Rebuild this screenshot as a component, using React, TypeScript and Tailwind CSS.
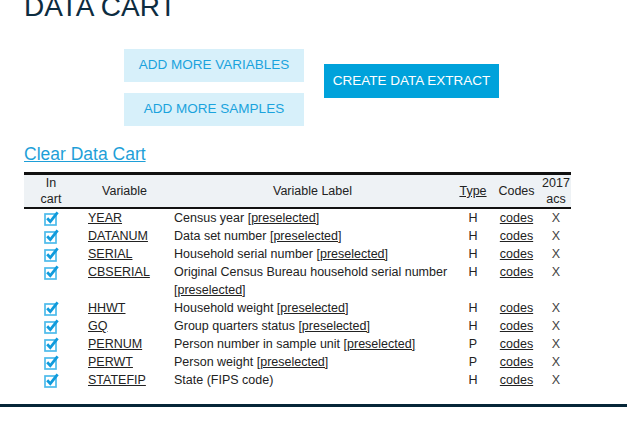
import React from "react";

type Row = { name: string; label: string; pre: boolean; type: string };

const rows: Row[] = [
    { name: "YEAR", label: "Census year", pre: true, type: "H" },
    { name: "DATANUM", label: "Data set number", pre: true, type: "H" },
    { name: "SERIAL", label: "Household serial number", pre: true, type: "H" },
    { name: "CBSERIAL", label: "Original Census Bureau household serial number", pre: true, type: "H" },
    { name: "HHWT", label: "Household weight", pre: true, type: "H" },
    { name: "GQ", label: "Group quarters status", pre: true, type: "H" },
    { name: "PERNUM", label: "Person number in sample unit", pre: true, type: "P" },
    { name: "PERWT", label: "Person weight", pre: true, type: "P" },
    { name: "STATEFIP", label: "State (FIPS code)", pre: false, type: "H" },
];

const CheckIcon = () => (
    <svg width="15" height="15" viewBox="0 0 15 15" className="inline-block">
        <rect x="1" y="3" width="11" height="11" fill="none" stroke="#4dbbeb" strokeWidth="1.7" />
        <path d="M3.2 7.2 L6.3 10.6 L13.6 1.4" fill="none" stroke="#109bdc" strokeWidth="2.8" />
    </svg>
);

const App = () => {
    return (
        <div className="min-h-[432px] w-[627px] bg-white font-['Liberation_Sans',Arial,sans-serif] text-[#222]">
            <h1 className="ml-[24px] mt-[-8px] text-[28px] leading-[30px] text-[#0d2c40]">DATA CART</h1>

            <div className="ml-[124px] mt-[27px] flex gap-[20px]">
                <div className="flex flex-col gap-[11px]">
                    <button className="h-[33px] w-[180px] bg-[#d7f0fa] text-[13.5px] text-[#1aa3dd]">ADD MORE VARIABLES</button>
                    <button className="h-[33px] w-[180px] bg-[#d7f0fa] text-[13.5px] text-[#1aa3dd]">ADD MORE SAMPLES</button>
                </div>
                <button className="mt-[15px] h-[34px] w-[175px] bg-[#00a2db] text-[13.5px] text-white">CREATE DATA EXTRACT</button>
            </div>

            <a href="#" className="ml-[24px] mt-[17px] block w-fit text-[17.5px] leading-[22px] text-[#1e9fd8] underline">
                Clear Data Cart
            </a>

            <table className="ml-[24px] mt-[7px] w-[547px] table-fixed border-collapse text-[12.5px]">
                <colgroup>
                    <col className="w-[54px]" />
                    <col className="w-[93px]" />
                    <col className="w-[283px]" />
                    <col className="w-[38px]" />
                    <col className="w-[49px]" />
                    <col className="w-[30px]" />
                </colgroup>
                <thead>
                    <tr className="border-t-[3px] border-b-2 border-[#111] bg-[#eef2f5] leading-[16px]">
                        <th className="h-[32px] p-0 text-center font-normal">In<br />cart</th>
                        <th className="p-0 text-center font-normal">Variable</th>
                        <th className="p-0 text-center font-normal">Variable Label</th>
                        <th className="p-0 text-center font-normal underline">Type</th>
                        <th className="p-0 text-center font-normal">Codes</th>
                        <th className="p-0 text-center font-normal">2017<br />acs</th>
                    </tr>
                </thead>
                <tbody className="leading-[18px]">
                    {rows.map((r) => (
                        <tr key={r.name} className="align-top">
                            <td className="p-0 pt-[2px] text-center leading-[0]"><CheckIcon /></td>
                            <td className="p-0 pl-[10px]"><a href="#" className="underline">{r.name}</a></td>
                            <td className="p-0 pl-[3px] pr-[4px]">
                                {r.label}
                                {r.pre && (
                                    <>
                                        {" "}
                                        <a href="#" className="underline">[preselected]</a>
                                    </>
                                )}
                            </td>
                            <td className="p-0 text-center">{r.type}</td>
                            <td className="p-0 text-center"><a href="#" className="underline">codes</a></td>
                            <td className="p-0 text-center text-[#444]">X</td>
                        </tr>
                    ))}
                </tbody>
            </table>

            <div className="mt-[15px] h-[3px] w-full bg-[#062638]" />
        </div>
    );
};

export default App;
